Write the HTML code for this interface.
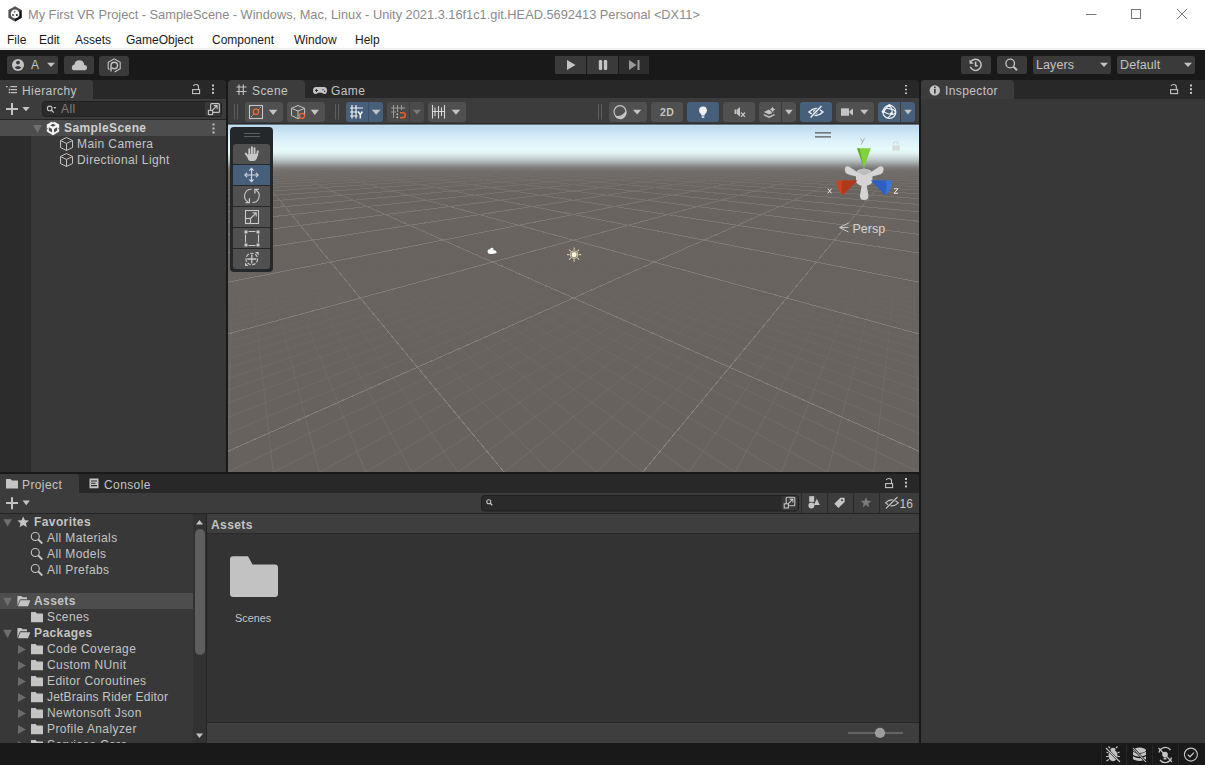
<!DOCTYPE html>
<html><head><meta charset="utf-8">
<style>
*{margin:0;padding:0;box-sizing:border-box}
html,body{width:1205px;height:765px;overflow:hidden;background:#191919;font-family:"Liberation Sans",sans-serif;position:relative}
.a{position:absolute}
.t{position:absolute;white-space:nowrap;color:#c4c4c4;font-size:12px;line-height:14px;letter-spacing:0.4px}
.m{letter-spacing:0}
.b{font-weight:bold}
.btn{position:absolute;background:#3a3a3a;border-radius:2px}
.tb{position:absolute;background:#505050;border-radius:3px;top:102px;height:20px}
.blue{background:#46607c}
svg{position:absolute;overflow:visible}
</style></head><body>
<!-- ============ title bar ============ -->
<div class="a" style="left:0;top:0;width:1205px;height:48px;background:#fff"></div>
<div class="a" style="left:0;top:48px;width:1205px;height:2px;background:#f0f0f0"></div>
<svg style="left:0;top:0" width="30" height="30">
<path d="M15 6.3L21.6 10.1V17.7L15 21.5L8.4 17.7V10.1Z" fill="#505050"/>
<path d="M21.6 10.1V17.7L15 21.5V19L19.5 16.4V11.3Z" fill="#111"/>
<circle cx="15" cy="13.9" r="4.3" fill="#f4f4f4"/>
<circle cx="14.7" cy="11.8" r="1" fill="#888"/>
<circle cx="13" cy="15" r="1" fill="#444"/>
<circle cx="16.8" cy="15" r="1" fill="#222"/>
</svg>
<div class="t m" style="left:28px;top:8px;color:#8a8a8a;font-size:12.8px">My First VR Project - SampleScene - Windows, Mac, Linux - Unity 2021.3.16f1c1.git.HEAD.5692413 Personal &lt;DX11&gt;</div>
<div class="t m" style="left:7px;top:33px;color:#1a1a1a">File</div>
<div class="t m" style="left:39px;top:33px;color:#1a1a1a">Edit</div>
<div class="t m" style="left:75px;top:33px;color:#1a1a1a">Assets</div>
<div class="t m" style="left:126px;top:33px;color:#1a1a1a">GameObject</div>
<div class="t m" style="left:212px;top:33px;color:#1a1a1a">Component</div>
<div class="t m" style="left:294px;top:33px;color:#1a1a1a">Window</div>
<div class="t m" style="left:355px;top:33px;color:#1a1a1a">Help</div>
<svg style="left:0;top:0" width="1205" height="30">
<path d="M1086 14.5H1096.5" stroke="#777" stroke-width="1"/>
<rect x="1131.5" y="9.5" width="9" height="9" stroke="#777" fill="none"/>
<path d="M1177 9L1187 19M1187 9L1177 19" stroke="#777" stroke-width="1"/>
</svg>

<!-- ============ main toolbar ============ -->
<div class="a" style="left:0;top:50px;width:1205px;height:30px;background:#191919"></div>
<div class="btn" style="left:7px;top:56px;width:51px;height:18px"></div>
<div class="btn" style="left:64px;top:56px;width:30px;height:18px"></div>
<div class="btn" style="left:99px;top:56px;width:30px;height:20px;border-radius:3px"></div>
<div class="btn" style="left:555px;top:56px;width:31px;height:18px;border-radius:0"></div>
<div class="btn" style="left:587px;top:56px;width:31px;height:18px;border-radius:0"></div>
<div class="btn" style="left:619px;top:56px;width:30px;height:18px;border-radius:0;background:#2d2d2d"></div>
<div class="btn" style="left:961px;top:56px;width:30px;height:18px"></div>
<div class="btn" style="left:997px;top:56px;width:30px;height:18px"></div>
<div class="btn" style="left:1033px;top:56px;width:78px;height:18px"></div>
<div class="btn" style="left:1117px;top:56px;width:78px;height:18px"></div>
<div class="t" style="left:31px;top:58px;color:#c4c4c4">A</div>
<div class="t" style="left:1036px;top:58px;color:#c4c4c4;font-size:12.5px;letter-spacing:0.1px">Layers</div>
<div class="t" style="left:1120px;top:58px;color:#c4c4c4;font-size:12.5px;letter-spacing:0.1px">Default</div>
<svg style="left:0;top:50px" width="1205" height="30">
<circle cx="18" cy="15" r="6" fill="#c4c4c4"/>
<circle cx="18" cy="12.6" r="1.9" fill="#3a3a3a"/>
<path d="M14.6 17.6Q18 14.6 21.4 17.6Q20 19.3 18 19.3Q16 19.3 14.6 17.6Z" fill="#3a3a3a"/>
<path d="M47 12.8H55L51 17Z" fill="#c4c4c4"/>
<path d="M73.5 20.2H85Q87 20.2 87 17.8Q87 15.2 84.3 15.1Q83.8 10.3 79.2 10.3Q75.3 10.3 74.4 14.5Q71.8 15 71.8 17.6Q71.8 20.2 73.5 20.2Z" fill="#c4c4c4"/>
<path d="M111 21.5V15.5Q111 12.3 114.3 12.3Q117.5 12.3 117.5 15.5Q117.5 18.7 114.3 18.7Q112.6 18.7 111.8 17.6" stroke="#c4c4c4" stroke-width="1.4" fill="none"/>
<path d="M109.5 19.5L108.2 18.7V12.2L114.2 8.8L120.2 12.2V18.7L114.6 21.9" stroke="#c4c4c4" stroke-width="1.1" fill="none"/>
<path d="M567 10V20L575.5 15Z" fill="#c4c4c4"/>
<rect x="598.8" y="10" width="3.4" height="10" rx="1.2" fill="#c4c4c4"/>
<rect x="603.8" y="10" width="3.4" height="10" rx="1.2" fill="#c4c4c4"/>
<path d="M629 10V20L636.5 15Z" fill="#9a9a9a"/>
<rect x="637.5" y="10" width="2" height="10" fill="#9a9a9a"/>
<path d="M971.2 11.3A5.6 5.6 0 1 1 970.3 16.8" stroke="#c4c4c4" stroke-width="1.5" fill="none"/>
<path d="M969.5 9.6V13.8H973.8Z" fill="#c4c4c4"/>
<path d="M975.6 11.5V15.7H977.8" stroke="#c4c4c4" stroke-width="1.6" fill="none"/>
<circle cx="1010.2" cy="13.5" r="4.3" stroke="#c4c4c4" stroke-width="1.3" fill="none"/>
<path d="M1013.3 16.6L1017 20.2" stroke="#c4c4c4" stroke-width="2" />
<path d="M1100 12.8H1108L1104 17Z" fill="#c4c4c4"/>
<path d="M1184 12.8H1192L1188 17Z" fill="#c4c4c4"/>
</svg>

<!-- ============ hierarchy ============ -->
<div class="a" style="left:0;top:80px;width:226px;height:392px;background:#383838;border-radius:0 4px 0 0"></div>
<div class="a" style="left:0;top:80px;width:226px;height:19px;background:#282828;border-radius:0 4px 0 0"></div>
<div class="a" style="left:0;top:80px;width:93px;height:19px;background:#3c3c3c;border-radius:0 3px 0 0"></div>
<div class="a" style="left:0;top:99px;width:226px;height:21px;background:#3c3c3c;border-bottom:1px solid #242424"></div>
<div class="a" style="left:42px;top:101px;width:180px;height:16px;background:#2a2a2a;border:1px solid #212121;border-radius:3px"></div>
<div class="a" style="left:205px;top:102px;width:16px;height:14px;background:#383838;border-radius:0 2px 2px 0"></div>
<div class="a" style="left:0;top:120px;width:226px;height:16px;background:#4d4d4d"></div>
<div class="a" style="left:0;top:136px;width:31px;height:336px;background:#2c2c2c"></div>
<div class="t" style="left:22px;top:84px">Hierarchy</div>
<div class="t" style="left:61px;top:102px;color:#7f7f7f">All</div>
<div class="t b" style="left:64px;top:121px;color:#d0d0d0">SampleScene</div>
<div class="t" style="left:77px;top:137px">Main Camera</div>
<div class="t" style="left:77px;top:153px">Directional Light</div>
<svg style="left:0;top:80px" width="226" height="80">
<g fill="#c4c4c4">
<rect x="10.5" y="6" width="6.5" height="1.2"/><rect x="10.5" y="9" width="6.5" height="1.2"/><rect x="10.5" y="12" width="6.5" height="1.2"/>
<rect x="6" y="6" width="1.6" height="1.2"/><rect x="8.7" y="9" width="1.2" height="1.2"/><rect x="8.7" y="12" width="1.2" height="1.2"/>
<rect x="9" y="7" width="0.6" height="6" opacity="0.6"/>
</g>
<path d="M193.2 6Q194 4.5 196 4.5Q198.5 4.5 198.5 6.8V9.5" stroke="#c4c4c4" stroke-width="1.1" fill="none"/>
<rect x="192.6" y="9.6" width="7" height="4" stroke="#c4c4c4" stroke-width="1.1" fill="none"/>
<rect x="212" y="4.5" width="2" height="2" fill="#c4c4c4"/><rect x="212" y="8.2" width="2" height="2" fill="#c4c4c4"/><rect x="212" y="11.9" width="2" height="2" fill="#c4c4c4"/>
<rect x="6" y="28" width="12" height="2" fill="#c4c4c4"/><rect x="11" y="23" width="2" height="12" fill="#c4c4c4"/>
<path d="M22.3 27H29.7L26 31.2Z" fill="#c4c4c4"/>
<circle cx="49.7" cy="28.4" r="2.3" stroke="#c4c4c4" stroke-width="1.1" fill="none"/>
<path d="M51.3 30L53.8 32.6" stroke="#c4c4c4" stroke-width="1.3"/>
<path d="M53.3 27H56.4L54.85 29Z" fill="#c4c4c4"/>
<rect x="210.6" y="23.6" width="8.8" height="8.8" rx="1" stroke="#c4c4c4" stroke-width="1.1" fill="none"/>
<rect x="208.4" y="30.4" width="4.2" height="4.2" stroke="#c4c4c4" stroke-width="1.1" fill="#383838"/>
<path d="M212.5 30.2L216.8 25.9M213.8 25.6H217.1V28.9" stroke="#c4c4c4" stroke-width="1.1" fill="none"/>
<path d="M33 45H42L37.5 53Z" fill="#6e6e6e"/>
<rect x="212.5" y="43.5" width="2" height="2" fill="#c4c4c4"/><rect x="212.5" y="47.5" width="2" height="2" fill="#c4c4c4"/><rect x="212.5" y="51.5" width="2" height="2" fill="#c4c4c4"/>
<path d="M53 41L59.2 44.6V51.6L53 55.2L46.8 51.6V44.6Z" fill="#f4f4f4"/>
<g fill="#4d4d4d">
<path d="M50.3 45.3L53 43.8L55.7 45.3L53 46.8Z"/>
<path d="M48.8 47.2L52 49V52.4L48.8 50.6Z"/>
<path d="M57.2 47.2L54 49V52.4L57.2 50.6Z"/>
<path d="M51.8 41H54.2L53 43Z"/>
<path d="M46.6 47.5L47.9 48.5L46.6 49.5Z"/>
<path d="M59.4 47.5L58.1 48.5L59.4 49.5Z"/>
</g>
<g stroke="#c4c4c4" stroke-width="1" fill="none" stroke-linejoin="round">
<path d="M66.5 57.5L72.5 60.5V67.5L66.5 70.5L60.5 67.5V60.5Z"/><path d="M60.5 60.5L66.5 63.5L72.5 60.5M66.5 63.5V70.5"/>
<path d="M66.5 73.5L72.5 76.5V83.5L66.5 86.5L60.5 83.5V76.5Z"/><path d="M60.5 76.5L66.5 79.5L72.5 76.5M66.5 79.5V86.5"/>
</g>
</svg>

<!-- ============ scene ============ -->
<div class="a" style="left:228px;top:80px;width:691px;height:392px;background:#282828;border-radius:4px 4px 0 0"></div>
<div class="a" style="left:228px;top:80px;width:77px;height:19px;background:#3c3c3c;border-radius:4px 4px 0 0"></div>
<div class="a" style="left:228px;top:98px;width:691px;height:26px;background:#3c3c3c"></div>
<div class="t" style="left:252px;top:84px">Scene</div>
<div class="t" style="left:331px;top:84px">Game</div>
<div class="tb" style="left:245px;width:38px"></div>
<div class="tb" style="left:287px;width:38px"></div>
<div class="tb blue" style="left:346px;width:37px"></div>
<div class="a" style="left:368px;top:102px;width:1px;height:20px;background:#3a4e66"></div>
<div class="tb" style="left:387px;width:37px;background:#4a4a4a"></div>
<div class="a" style="left:409px;top:102px;width:1px;height:20px;background:#3c3c3c"></div>
<div class="tb" style="left:428px;width:38px"></div>
<div class="tb" style="left:609px;width:38px"></div>
<div class="tb" style="left:651px;width:32px"></div>
<div class="tb blue" style="left:687px;width:32px"></div>
<div class="tb" style="left:723px;width:32px"></div>
<div class="tb" style="left:759px;width:37px"></div>
<div class="a" style="left:781px;top:102px;width:1px;height:20px;background:#3c3c3c"></div>
<div class="tb blue" style="left:800px;width:32px"></div>
<div class="tb" style="left:836px;width:38px"></div>
<div class="tb blue" style="left:878px;width:37px"></div>
<div class="a" style="left:900px;top:102px;width:1px;height:20px;background:#3c3c3c"></div>
<div class="t b" style="left:660px;top:105px;font-size:10.5px;color:#c4c4c4">2D</div>
<div class="a" style="left:228px;top:124px;width:691px;height:348px;overflow:hidden"><svg style="left:0;top:0;overflow:hidden" width="691" height="348" viewBox="228 124 691 348">
<defs>
<linearGradient id="sky" x1="0" y1="124" x2="0" y2="472" gradientUnits="userSpaceOnUse">
<stop offset="0.0000" stop-color="#c4e0f4"/>
<stop offset="0.0086" stop-color="#bedaee"/>
<stop offset="0.0259" stop-color="#cce6f4"/>
<stop offset="0.0489" stop-color="#ddf2fa"/>
<stop offset="0.0718" stop-color="#e6fafc"/>
<stop offset="0.0833" stop-color="#e2f2f2"/>
<stop offset="0.0920" stop-color="#d4e0e0"/>
<stop offset="0.1006" stop-color="#c2cece"/>
<stop offset="0.1092" stop-color="#aab3b3"/>
<stop offset="0.1178" stop-color="#929595"/>
<stop offset="0.1264" stop-color="#7c7b79"/>
<stop offset="0.1351" stop-color="#716d6a"/>
<stop offset="0.1466" stop-color="#6d6966"/>
<stop offset="0.1897" stop-color="#69645f"/>
<stop offset="1.0000" stop-color="#68625e"/>
</linearGradient>
<linearGradient id="gmaj" x1="0" y1="168" x2="0" y2="472" gradientUnits="userSpaceOnUse">
<stop offset="0.0000" stop-color="#fff" stop-opacity="0.000"/>
<stop offset="0.0329" stop-color="#fff" stop-opacity="0.030"/>
<stop offset="0.0724" stop-color="#fff" stop-opacity="0.080"/>
<stop offset="0.1382" stop-color="#fff" stop-opacity="0.120"/>
<stop offset="0.2697" stop-color="#fff" stop-opacity="0.150"/>
<stop offset="1.0000" stop-color="#fff" stop-opacity="0.190"/>
</linearGradient>
<linearGradient id="gmin" x1="0" y1="260" x2="0" y2="472" gradientUnits="userSpaceOnUse">
<stop offset="0" stop-color="#fff" stop-opacity="0"/>
<stop offset="0.4" stop-color="#fff" stop-opacity="0.03"/>
<stop offset="1" stop-color="#fff" stop-opacity="0.07"/>
</linearGradient>
</defs>
<rect x="228" y="124" width="691" height="348" fill="url(#sky)"/>
<path d="M573.5 206.5L1106.3 298.0M573.5 206.5L40.7 298.0M569.3 207.3L1112.7 302.9M577.7 207.3L34.3 302.9M565.0 208.0L1119.6 308.1M582.0 208.0L27.4 308.1M560.7 208.7L1126.9 313.7M586.3 208.7L20.1 313.7M556.2 209.5L1134.8 319.7M590.8 209.5L12.2 319.7M546.8 211.1L1152.4 333.0M600.2 211.1L-5.4 333.0M541.9 212.0L1162.3 340.5M605.1 212.0L-15.3 340.5M536.9 212.8L1173.0 348.7M610.1 212.8L-26.0 348.7M531.8 213.7L1184.7 357.5M615.2 213.7L-37.7 357.5M526.5 214.6L1197.5 367.2M620.5 214.6L-50.5 367.2M521.1 215.5L1211.4 377.8M625.9 215.5L-64.4 377.8M515.5 216.5L1226.9 389.5M631.5 216.5L-79.9 389.5M509.7 217.5L1243.9 402.5M637.3 217.5L-96.9 402.5M503.8 218.5L1263.0 416.9M643.2 218.5L-116.0 416.9M491.4 220.6L1308.4 451.4M655.6 220.6L-161.4 451.4M484.9 221.7L1335.7 472.2M662.1 221.7L-188.7 472.2M478.3 222.9L1367.2 496.0M668.7 222.9L-220.2 496.0M471.4 224.1L1403.6 523.7M675.6 224.1L-256.6 523.7M464.2 225.3L1446.3 556.1M682.8 225.3L-299.3 556.1M456.9 226.6L1497.1 594.7M690.1 226.6L-350.1 594.7M449.3 227.9L1558.5 641.3M697.7 227.9L-411.5 641.3M441.4 229.2L1634.3 698.9M705.6 229.2L-487.3 698.9M433.3 230.6L1730.2 771.6M713.7 230.6L-583.2 771.6M416.1 233.6L2025.3 995.7M730.9 233.6L-878.3 995.7M407.1 235.1L2270.0 1181.4M739.9 235.1L-1123.0 1181.4M397.7 236.7L2652.1 1471.5M749.3 236.7L-1505.1 1471.5M387.9 238.4L3332.8 1988.3M759.1 238.4L-2185.8 1988.3M377.8 240.1L4886.5 3167.9M769.2 240.1L-3739.5 3167.9M367.3 241.9L8574.3 6116.2M779.7 241.9L-7427.3 6116.2M356.4 243.8L7721.8 6116.2M790.6 243.8L-6574.8 6116.2M345.0 245.8L6869.3 6116.2M802.0 245.8L-5722.3 6116.2M333.1 247.8L6016.8 6116.2M813.9 247.8L-4869.8 6116.2M307.8 252.2L4311.9 6116.2M839.2 252.2L-3164.9 6116.2M294.3 254.5L3459.4 6116.2M852.7 254.5L-2312.4 6116.2M280.1 256.9L2606.9 6116.2M866.9 256.9L-1459.9 6116.2M265.3 259.4L1754.4 6116.2M881.7 259.4L-607.4 6116.2M249.8 262.1L901.9 6116.2M897.2 262.1L245.1 6116.2M233.5 264.9L49.4 6116.2M913.5 264.9L1097.6 6116.2" stroke="url(#gmin)" stroke-width="1" fill="none"/>
<path d="M573.5 154.5L9098.4 298.0M573.5 154.5L-7951.4 298.0M569.4 154.5L12896.5 367.2M577.6 154.5L-11749.5 367.2M565.2 154.6L23266.1 556.1M581.8 154.6L-22119.1 556.1M560.9 154.7L166624.8 3167.9M586.1 154.7L-165477.8 3167.9M556.5 154.8L320584.9 6116.2M590.5 154.8L-319437.9 6116.2M552.0 154.8L312060.0 6116.2M595.0 154.8L-310913.0 6116.2M547.3 154.9L303535.1 6116.2M599.7 154.9L-302388.1 6116.2M542.6 155.0L295010.3 6116.2M604.4 155.0L-293863.3 6116.2M537.7 155.1L286485.4 6116.2M609.3 155.1L-285338.4 6116.2M532.7 155.2L277960.5 6116.2M614.3 155.2L-276813.5 6116.2M527.5 155.3L269435.6 6116.2M619.5 155.3L-268288.6 6116.2M522.2 155.3L260910.7 6116.2M624.8 155.3L-259763.7 6116.2M516.8 155.4L252385.9 6116.2M630.2 155.4L-251238.9 6116.2M511.2 155.5L243861.0 6116.2M635.8 155.5L-242714.0 6116.2M505.4 155.6L235336.1 6116.2M641.6 155.6L-234189.1 6116.2M499.5 155.7L226811.2 6116.2M647.5 155.7L-225664.2 6116.2M493.4 155.8L218286.3 6116.2M653.6 155.8L-217139.3 6116.2M487.1 155.9L209761.5 6116.2M659.9 155.9L-208614.5 6116.2M480.6 156.0L201236.6 6116.2M666.4 156.0L-200089.6 6116.2M473.9 156.2L192711.7 6116.2M673.1 156.2L-191564.7 6116.2M467.0 156.3L184186.8 6116.2M680.0 156.3L-183039.8 6116.2M459.9 156.4L175661.9 6116.2M687.1 156.4L-174514.9 6116.2M452.5 156.5L167137.1 6116.2M694.5 156.5L-165990.1 6116.2M444.9 156.6L158612.2 6116.2M702.1 156.6L-157465.2 6116.2M437.1 156.8L150087.3 6116.2M709.9 156.8L-148940.3 6116.2M428.9 156.9L141562.4 6116.2M718.1 156.9L-140415.4 6116.2M420.5 157.1L133037.5 6116.2M726.5 157.1L-131890.5 6116.2M411.8 157.2L124512.7 6116.2M735.2 157.2L-123365.7 6116.2M402.8 157.4L115987.8 6116.2M744.2 157.4L-114840.8 6116.2M393.4 157.5L107462.9 6116.2M753.6 157.5L-106315.9 6116.2M383.7 157.7L98938.0 6116.2M763.3 157.7L-97791.0 6116.2M373.6 157.8L90413.1 6116.2M773.4 157.8L-89266.1 6116.2M363.1 158.0L81888.3 6116.2M783.9 158.0L-80741.3 6116.2M352.2 158.2L73363.4 6116.2M794.8 158.2L-72216.4 6116.2M340.9 158.4L64838.5 6116.2M806.1 158.4L-63691.5 6116.2M329.1 158.6L56313.6 6116.2M817.9 158.6L-55166.6 6116.2M316.8 158.8L47788.7 6116.2M830.2 158.8L-46641.7 6116.2M303.9 159.0L39263.9 6116.2M843.1 159.0L-38116.9 6116.2M290.5 159.2L30739.0 6116.2M856.5 159.2L-29592.0 6116.2M276.5 159.5L22214.1 6116.2M870.5 159.5L-21067.1 6116.2M261.8 159.7L13689.2 6116.2M885.2 159.7L-12542.2 6116.2M246.4 160.0L5164.4 6116.2M900.6 160.0L-4017.4 6116.2M230.3 160.3L-3360.5 6116.2M916.7 160.3L4507.5 6116.2" stroke="url(#gmaj)" stroke-width="1" fill="none" shape-rendering="crispEdges"/>
</svg></div>
<div class="a" style="left:228px;top:123px;width:691px;height:1px;background:#2c2c2c"></div>
<div class="a" style="left:228px;top:124px;width:691px;height:1px;background:#2a2e32;opacity:0.6"></div>
<svg style="left:0;top:0" width="1205" height="130">
<g stroke="#c4c4c4" stroke-width="1.1" fill="none">
<path d="M239 84.5V95M243.3 84.5V95M236.5 87H246.5M236.5 91.5H246.5"/>
</g>
<path d="M316 87H324Q327 87 327 90.5Q327 94 324.5 94Q323 94 322 92.8H318Q317 94 315.5 94Q313 94 313 90.5Q313 87 316 87Z" fill="#c4c4c4"/>
<path d="M315 90.5H318M316.5 89V92" stroke="#282828" stroke-width="0.9"/>
<circle cx="323" cy="89.6" r="0.7" fill="#282828"/><circle cx="324.6" cy="91.2" r="0.7" fill="#282828"/>
<path d="M906 85v1.5M906 88.7v1.5M906 92.4v1.5" stroke="#c4c4c4" stroke-width="2"/>
<g stroke="#5e5e5e" stroke-width="1"><path d="M234.5 104V119.5M237.5 104V119.5M335.5 104V119.5M338.5 104V119.5M598.5 104V119.5M601.5 104V119.5"/></g>
<rect x="249.5" y="105.5" width="13" height="13" stroke="#c4c4c4" stroke-width="1.1" fill="none"/>
<path d="M251 117L261 107" stroke="#c4c4c4" stroke-width="0.9" stroke-dasharray="1.5 1"/>
<circle cx="256" cy="111.8" r="2.6" stroke="#f26b2f" stroke-width="1.2" fill="#505050"/>
<g fill="#c4c4c4"><path d="M268.9 109.7H277.3L273.1 114.9Z"/><path d="M310.7 109.7H319L314.85 114.9Z"/>
<path d="M371.8 109.7H380.5L376.15 114.7Z"/><path d="M451.6 109.7H460.3L455.95 114.7Z"/>
<path d="M633 109.7H641.3L637.15 114.5Z"/><path d="M785.1 109.7H792.7L788.9 114.5Z"/><path d="M860.2 109.7H868.4L864.3 114.5Z"/><path d="M904.3 109.7H911.8L908 114.5Z"/></g>
<path d="M413 109.7H421L417 114.5Z" fill="#7a7a7a"/>
<g stroke="#c4c4c4" stroke-width="1" fill="none" stroke-linejoin="round">
<path d="M298 105.5L304.6 108.3V115.6L298 118.6L291.5 115.6V108.3Z"/><path d="M291.5 108.3L298 111L304.6 108.3M298 111V118.6"/>
</g>
<circle cx="302" cy="115.8" r="2.5" stroke="#f26b2f" stroke-width="1.2" fill="#505050"/>
<g stroke="#f0f0f0" stroke-width="1.2" fill="none">
<path d="M352 105V118.5M356 105V118.5M350 108H363M350 112H357.5M350 116H357.5"/>
<path d="M358.2 111.5L360.3 114.6L362.4 111.5M360.3 114.6V118.5" stroke-width="1.5"/>
</g>
<g stroke="#9a9a9a" stroke-width="1" fill="none">
<path d="M393.5 105V118M397.5 105V112M401.5 105V110M391.2 108H405.3M391.2 112H396"/>
</g>
<rect x="396.5" y="113.5" width="1.6" height="1.6" fill="#c4c4c4"/><rect x="396.5" y="116.5" width="1.6" height="1.6" fill="#c4c4c4"/>
<path d="M400 112.8H403Q405.2 112.8 405.2 115.2Q405.2 117.6 403 117.6H400" stroke="#e2602c" stroke-width="1.6" fill="none"/>
<g stroke="#d8d8d8" stroke-width="1.1" fill="none">
<path d="M432.5 105V118.5M444.5 105V118.5M435 107.5V116M438.5 106V118.5M441.5 107.5V116M432 111.5H445"/>
</g>
<circle cx="620" cy="111.7" r="6" stroke="#c4c4c4" stroke-width="1.2" fill="none"/>
<path d="M626 110.5A6 6 0 0 1 614.6 115.5Q620 117.2 623.6 113.5Q625.6 111.6 626 110.5Z" fill="#c4c4c4"/>
<circle cx="703" cy="110.3" r="3.9" fill="#f0f0f0"/>
<path d="M700.7 112.5H705.3L704.6 115.5H701.4Z" fill="#f0f0f0"/>
<rect x="701.6" y="116.2" width="2.8" height="1.6" rx="0.6" fill="#f0f0f0"/>
<path d="M734.5 109.5H736.5V114H734.5Z" fill="#c4c4c4"/>
<path d="M737 109.5L740 107V116.8L737 114Z" fill="#c4c4c4"/>
<path d="M741 112.5L745 116.8M745 112.5L741 116.8" stroke="#c4c4c4" stroke-width="1.2"/>
<path d="M763.8 112L769 109.6L774.5 112L769 114.6Z" fill="#c4c4c4"/>
<path d="M763.8 114.6L769 117.2L774.5 114.6" stroke="#c4c4c4" stroke-width="1.4" fill="none"/>
<path d="M772.6 105.8Q773.2 108.8 776.2 109.4Q773.2 110 772.6 113Q772 110 769 109.4Q772 108.8 772.6 105.8Z" fill="#c4c4c4" stroke="#505050" stroke-width="0.9"/>
<path d="M809 112Q816 105.2 823 112Q816 118.8 809 112Z" stroke="#f0f0f0" stroke-width="1.4" fill="none"/>
<circle cx="815.3" cy="112" r="2.3" fill="#f0f0f0"/>
<path d="M810.3 117.8L821.8 105.8" stroke="#46607c" stroke-width="2.8"/>
<path d="M810.6 117.5L821.5 106.1" stroke="#f0f0f0" stroke-width="1.4"/>
<rect x="841" y="108.3" width="8" height="7.5" fill="#c4c4c4"/>
<path d="M849.5 111L853 108.5V115.6L849.5 113Z" fill="#c4c4c4"/>
<g stroke="#f0f0f0" stroke-width="1.1" fill="none">
<circle cx="889.4" cy="111.9" r="6.5"/>
<ellipse cx="889.6" cy="111.4" rx="5.8" ry="2.6" transform="rotate(12 889.6 111.4)"/>
<path d="M889.4 105.5Q893.5 109 891.6 113.5Q890 116.5 887.5 118"/>
<path d="M884 111.8Q886 107 889.4 105.5"/>
</g>
<g fill="#f0f0f0"><circle cx="889.4" cy="105.6" r="1.6"/><circle cx="883.2" cy="111.6" r="1.6"/><circle cx="891.6" cy="113.5" r="1.5"/></g>
</svg>

<svg style="left:0;top:0" width="1205" height="480">
<path d="M487.5 251.5Q487.5 249 490 249.2Q490.8 247.6 492.3 247.8Q493.8 248 493.6 250Q496.5 250.3 496.8 252.8Q494 254.3 490 254Q487.5 253.6 487.5 251.5Z" fill="#fafafa"/>
<g stroke="#d8cca8" stroke-width="1.1">
<path d="M574.1 247.5V250M574.1 259.2V261.7M567 254.6H569.5M578.7 254.6H581.2M569.1 249.6L570.8 251.3M577.4 257.9L579.1 259.6M579.1 249.6L577.4 251.3M570.8 257.9L569.1 259.6"/>
</g>
<circle cx="574.1" cy="254.6" r="3.8" stroke="#d8cca8" stroke-width="1" fill="none"/>
<circle cx="574.1" cy="254.6" r="2.6" fill="#fff4d6"/>
<rect x="230" y="127" width="43" height="145" rx="4" fill="#25282a"/>
<path d="M244 133.5H260M244 136.5H260" stroke="#5c5f62" stroke-width="1"/>
<path d="M233 147Q233 144 236 144H267Q270 144 270 147V164H233Z" fill="#505050"/>
<rect x="233" y="165" width="37" height="20" fill="#46607c"/>
<rect x="233" y="186" width="37" height="20" fill="#505050"/>
<rect x="233" y="207" width="37" height="20" fill="#505050"/>
<rect x="233" y="228" width="37" height="20" fill="#505050"/>
<path d="M233 249H270V266Q270 269 267 269H236Q233 269 233 266Z" fill="#505050"/>
<g stroke="#c8c8c8" stroke-width="1.9" stroke-linecap="round" fill="none">
<path d="M249.3 155V149.2M251.9 155V147.3M254.5 155V148.2M256.9 155.5L257.8 151.2M248.6 157.5L245.8 153.6"/>
</g>
<path d="M248.3 154H258.2L256.8 158.5Q255.6 161 253.5 161H250.5Q248.6 161 247.8 158.8Z" fill="#c8c8c8"/>
<g stroke="#d0d8e0" stroke-width="1.2" fill="none">
<path d="M251.5 168.5V181.5M245 175H258"/>
<path d="M249.3 170.6L251.5 168.4L253.7 170.6M249.3 179.4L251.5 181.6L253.7 179.4M247.1 172.8L244.9 175L247.1 177.2M255.9 172.8L258.1 175L255.9 177.2"/>
</g>
<g stroke="#c8c8c8" stroke-width="1.1" fill="none">
<path d="M251.6 189.3A6.7 6.7 0 0 0 248 201.8M252.4 202.5A6.7 6.7 0 0 0 255.8 190"/>
<path d="M249.4 198.2V202.6H245.5M258.8 189.3H254.9V193.5" stroke-width="1.3"/>
<rect x="245.5" y="210.5" width="13" height="13"/>
<rect x="245.5" y="218.5" width="5" height="5"/>
<path d="M250.5 218.5L256 213M252.5 212.8H256.2V216.5"/>
<path d="M248.5 231.5H255.5M248.5 245.5H255.5M245.5 234.5V242.5M258.5 234.5V242.5"/>
<circle cx="251.8" cy="259" r="5.8" stroke-dasharray="3.5 1.5"/>
<path d="M251.8 254.5V263.5M247.3 259H256.3" stroke-width="1.3"/>
</g>
<g fill="#c8c8c8"><rect x="244.5" y="230.5" width="3" height="3"/><rect x="256.5" y="230.5" width="3" height="3"/><rect x="244.5" y="243.5" width="3" height="3"/><rect x="256.5" y="243.5" width="3" height="3"/>
<path d="M245 266H248.5L245 262.5Z"/><path d="M258.6 252H255.1L258.6 255.5Z"/></g>
<path d="M815 132.8H831M815 136.8H831" stroke="#5a5a5a" stroke-width="1.2"/>
<path d="M893.3 144.5Q893.3 141.8 895.8 141.8Q898.3 141.8 898.3 144.5" stroke="#d6dcdc" stroke-width="1.2" fill="none"/>
<rect x="892.3" y="145.5" width="7.5" height="5" fill="#d6dcdc"/>
<path d="M860.6 138.3L862.6 142M864.6 138.3L861.2 144.5" stroke="#b4bcbc" stroke-width="1.1"/>
<path d="M857.1 148.2H870.8L863.9 168Z" fill="#80d040"/>
<path d="M857.1 148.2H859.5L863.9 168Z" fill="#5fae2a"/>
<g fill="#d4d4d4">
<path d="M856 174Q856 171 859 169.8L864 168.5L869 169.8Q872.4 171 872.4 174V181Q872.4 183.5 869 185L864 186.5L859 185Q856 183.5 856 181Z"/>
<path d="M858 172.5L849 166.5Q845 165.5 844.8 169.5Q845 173.5 848.5 174.5L858 177Z"/>
<path d="M870.4 172.5L879.4 166.5Q883.4 165.5 883.6 169.5Q883.4 173.5 879.9 174.5L870.4 177Z"/>
<path d="M862 184L860 195Q859.5 200 864.2 200Q868.9 200 868.4 195L866.4 184Z"/>
</g>
<path d="M856.5 172L864 168.6L871.9 172L864 175.5Z" fill="#bdbdbd"/>
<path d="M836.3 180.4H857.1L843 195Q837.5 192 836.3 180.4Z" fill="#c8431f"/>
<path d="M843 195Q840.5 188 842.5 180.4H857.1Z" fill="#b0391a"/>
<path d="M892 180.4H871L885 195Q890.5 192 892 180.4Z" fill="#3a72dc"/>
<path d="M885 195Q887.5 188 885.5 180.4H871Z" fill="#2f5fc0"/>
<path d="M827.8 188.7L831.5 193.3M831.5 188.7L827.8 193.3" stroke="#e8e8e8" stroke-width="1"/>
<path d="M894 188.8H898L894 193.3H898" stroke="#e8e8e8" stroke-width="1" fill="none"/>
<path d="M848.5 223L839.5 227.5L848.5 232M840 227.5H848.5" stroke="#d0d0d0" stroke-width="0.9" fill="none"/>
</svg>
<div class="t" style="left:852.5px;top:221.5px;color:#d2d2d2;font-size:12.5px;letter-spacing:0">Persp</div>

<!-- ============ inspector ============ -->
<div class="a" style="left:921px;top:80px;width:284px;height:663px;background:#383838;border-radius:4px 0 0 0"></div>
<div class="a" style="left:921px;top:80px;width:284px;height:19px;background:#282828;border-radius:4px 0 0 0"></div>
<div class="a" style="left:921px;top:80px;width:93px;height:19px;background:#3c3c3c;border-radius:4px 4px 0 0"></div>
<div class="t" style="left:945px;top:84px">Inspector</div>
<svg style="left:0;top:80px" width="1205" height="20">
<circle cx="934.8" cy="10.4" r="5.2" fill="#c4c4c4"/>
<rect x="934" y="9" width="1.7" height="4.5" fill="#3c3c3c"/><rect x="934" y="6.6" width="1.7" height="1.6" fill="#3c3c3c"/>
<path d="M1171 6Q1171.8 4.5 1173.8 4.5Q1176.3 4.5 1176.3 6.8V9.5" stroke="#c4c4c4" stroke-width="1.1" fill="none"/>
<rect x="1170.6" y="9.6" width="7" height="4" stroke="#c4c4c4" stroke-width="1.1" fill="none"/>
<rect x="1190" y="4.5" width="2" height="2" fill="#c4c4c4"/><rect x="1190" y="8.2" width="2" height="2" fill="#c4c4c4"/><rect x="1190" y="11.9" width="2" height="2" fill="#c4c4c4"/>
</svg>

<!-- ============ project ============ -->
<div class="a" style="left:0;top:474px;width:919px;height:269px;background:#383838;border-radius:0 4px 0 0"></div>
<div class="a" style="left:0;top:474px;width:919px;height:19px;background:#282828;border-radius:0 4px 0 0"></div>
<div class="a" style="left:0;top:474px;width:79px;height:19px;background:#3c3c3c;border-radius:0 3px 0 0"></div>
<div class="a" style="left:0;top:493px;width:919px;height:21px;background:#3c3c3c;border-bottom:1px solid #242424"></div>
<div class="a" style="left:193px;top:514px;width:13px;height:229px;background:#323232"></div>
<div class="a" style="left:206px;top:514px;width:1px;height:229px;background:#242424"></div>
<div class="a" style="left:207px;top:514px;width:712px;height:229px;background:#333333"></div>
<div class="a" style="left:207px;top:514px;width:712px;height:20px;background:#3e3e3e;border-bottom:1px solid #2a2a2a"></div>
<div class="a" style="left:0;top:593px;width:193px;height:16px;background:#4d4d4d"></div>
<div class="a" style="left:195px;top:529px;width:10px;height:126px;background:#5e5e5e;border-radius:5px"></div>
<div class="a" style="left:207px;top:722px;width:712px;height:21px;background:#3e3e3e;border-top:1px solid #2a2a2a"></div>
<div class="t" style="left:22px;top:478px">Project</div>
<div class="t" style="left:104px;top:478px">Console</div>
<div class="t b" style="left:34px;top:515px">Favorites</div>
<div class="t" style="left:47px;top:531px">All Materials</div>
<div class="t" style="left:47px;top:547px">All Models</div>
<div class="t" style="left:47px;top:563px">All Prefabs</div>
<div class="t b" style="left:34px;top:594px">Assets</div>
<div class="t" style="left:47px;top:610px">Scenes</div>
<div class="t b" style="left:34px;top:626px">Packages</div>
<div class="t" style="left:47px;top:642px">Code Coverage</div>
<div class="t" style="left:47px;top:658px">Custom NUnit</div>
<div class="t" style="left:47px;top:674px">Editor Coroutines</div>
<div class="t" style="left:47px;top:690px;letter-spacing:0.2px">JetBrains Rider Editor</div>
<div class="t" style="left:47px;top:706px">Newtonsoft Json</div>
<div class="t" style="left:47px;top:722px">Profile Analyzer</div>
<div class="t" style="left:47px;top:738px">Services Core</div>
<div class="t b" style="left:211px;top:518px">Assets</div>
<div class="t" style="left:235px;top:610.5px;font-size:10.8px;letter-spacing:0.05px">Scenes</div>
<div class="t" style="left:899.5px;top:497px;font-size:12px;letter-spacing:0.2px">16</div>
<svg style="left:0;top:470px" width="1205" height="295">
<path d="M6 9.5Q6 9 6.5 9H10.5L12 10.5H17.5Q18 10.5 18 11V18.6H6Z" fill="#c4c4c4"/>
<path d="M89.5 8.5H98.5V18.3H89.5Z" fill="#c4c4c4"/>
<path d="M91 11H97M91 13.3H95.5M91 15.6H97" stroke="#282828" stroke-width="1.1"/>
<rect x="6" y="32" width="12" height="2" fill="#c4c4c4"/><rect x="11" y="27.2" width="2" height="12" fill="#c4c4c4"/>
<path d="M22.6 30.6H29.9L26.25 35.2Z" fill="#c4c4c4"/>
<rect x="481.5" y="25.5" width="317" height="15.5" rx="3" fill="#2a2a2a" stroke="#1f1f1f"/>
<rect x="781.5" y="26.2" width="16" height="14" fill="#383838"/>
<circle cx="488.8" cy="31.8" r="2" stroke="#c4c4c4" stroke-width="1.1" fill="none"/>
<path d="M490.2 33.2L492.2 35.2" stroke="#c4c4c4" stroke-width="1.3"/>
<rect x="786.2" y="27.2" width="8.6" height="8.6" rx="1" stroke="#c4c4c4" stroke-width="1.1" fill="none"/>
<rect x="784.2" y="33.8" width="4.2" height="4.2" stroke="#c4c4c4" stroke-width="1.1" fill="#383838"/>
<path d="M788.3 33.7L792.6 29.4M789.6 29.1H792.9V32.4" stroke="#c4c4c4" stroke-width="1.1" fill="none"/>
<g fill="#2a2a2a"><rect x="801" y="22" width="1" height="21"/><rect x="827" y="22" width="1" height="21"/><rect x="853" y="22" width="1" height="21"/><rect x="879" y="22" width="1" height="21"/></g>
<rect x="809.2" y="26.2" width="5" height="5.6" fill="#c4c4c4"/>
<circle cx="811.4" cy="35.6" r="3" fill="#c4c4c4"/>
<path d="M816.8 28.8L819.8 35H813.8Z" fill="#c4c4c4"/>
<path d="M834.3 33.8L840.4 27.8H844.6V32L838.5 38.1Z" fill="#c4c4c4"/>
<circle cx="842" cy="30.3" r="1" fill="#3c3c3c"/>
<path d="M866 27.2L867.5 30.8L871.2 31L868.3 33.4L869.3 37.2L866 35.1L862.7 37.2L863.7 33.4L860.8 31L864.5 30.8Z" fill="#7a7a7a"/>
<path d="M885.5 32.8Q891.5 26.8 898.5 32.8Q891.5 38.8 885.5 32.8Z" stroke="#c4c4c4" stroke-width="1.1" fill="none"/>
<path d="M886 38.5L897.5 27" stroke="#3c3c3c" stroke-width="2.4"/>
<path d="M886 38.5L897.5 27" stroke="#c4c4c4" stroke-width="1.1"/>
<g fill="#6e6e6e">
<path d="M3.3 49.2H12L7.65 56.5Z"/>
<path d="M3.2 127.8H11.9L7.55 136Z"/>
<path d="M3.2 159.8H11.9L7.55 168Z"/>
</g>
<g fill="#6a6a6a">
<path d="M18 174.9L26 179.45L18 184Z"/><path d="M18 190.9L26 195.45L18 200Z"/><path d="M18 206.9L26 211.45L18 216Z"/><path d="M18 222.9L26 227.45L18 232Z"/><path d="M18 238.9L26 243.45L18 248Z"/><path d="M18 254.9L26 259.45L18 264Z"/><path d="M18 270.9L26 275.45L18 280Z"/>
</g>
<path d="M23.2 46.5L24.9 50.3L29 50.6L25.9 53.3L26.8 57.2L23.2 55L19.6 57.2L20.5 53.3L17.4 50.6L21.5 50.3Z" fill="#c4c4c4"/>
<g stroke="#c4c4c4" stroke-width="1.1" fill="none">
<circle cx="35.3" cy="66.5" r="4"/><circle cx="35.3" cy="82.5" r="4"/><circle cx="35.3" cy="98.5" r="4"/>
</g>
<g stroke="#c4c4c4" stroke-width="1.8">
<path d="M38.3 69.5L42.3 73.5M38.3 85.5L42.3 89.5M38.3 101.5L42.3 105.5"/>
</g>
<g fill="#c4c4c4">
<path d="M17.4 136V126.6Q17.4 126 18 126H21.3L22.6 127.3H26.5Q27 127.3 27 127.8V129.2H20.6Q20 129.2 19.8 129.8Z" />
<path d="M18 136.3L20.4 130.2H30.3L28 136.3Z"/>
<path d="M17.4 168V158.6Q17.4 158 18 158H21.3L22.6 159.3H26.5Q27 159.3 27 159.8V161.2H20.6Q20 161.2 19.8 161.8Z" />
<path d="M18 168.3L20.4 162.2H30.3L28 168.3Z"/>
<path d="M31 142.6Q31 142 31.6 142H35.5L37 143.5H42.5Q43 143.5 43 144V152.3H31Z"/>
<path d="M31 174.6Q31 174 31.6 174H35.5L37 175.5H42.5Q43 175.5 43 176V184.3H31Z"/>
<path d="M31 190.6Q31 190 31.6 190H35.5L37 191.5H42.5Q43 191.5 43 192V200.3H31Z"/>
<path d="M31 206.6Q31 206 31.6 206H35.5L37 207.5H42.5Q43 207.5 43 208V216.3H31Z"/>
<path d="M31 222.6Q31 222 31.6 222H35.5L37 223.5H42.5Q43 223.5 43 224V232.3H31Z"/>
<path d="M31 238.6Q31 238 31.6 238H35.5L37 239.5H42.5Q43 239.5 43 240V248.3H31Z"/>
<path d="M31 254.6Q31 254 31.6 254H35.5L37 255.5H42.5Q43 255.5 43 256V264.3H31Z"/>
<path d="M31 270.6Q31 270 31.6 270H35.5L37 271.5H42.5Q43 271.5 43 272V280.3H31Z"/>
</g>
<path d="M196 54.5H203L199.5 50Z" fill="#c4c4c4"/>
<path d="M196 263.5H203L199.5 268Z" fill="#c4c4c4"/>
<path d="M230 89.5Q230 86.3 233.2 86.3H248L252.5 94.5H274.8Q278 94.5 278 97.7V123.8Q278 127 274.8 127H233.2Q230 127 230 123.8Z" fill="#c2c2c2"/>
<path d="M886.2 10Q887 8.5 889 8.5Q891.5 8.5 891.5 10.8V13.5" stroke="#c4c4c4" stroke-width="1.1" fill="none"/>
<rect x="885.6" y="13.6" width="7" height="4" stroke="#c4c4c4" stroke-width="1.1" fill="none"/>
<rect x="905" y="8" width="2" height="2" fill="#c4c4c4"/><rect x="905" y="11.7" width="2" height="2" fill="#c4c4c4"/><rect x="905" y="15.4" width="2" height="2" fill="#c4c4c4"/>
<path d="M848 262.9H903" stroke="#636363" stroke-width="2"/>
<circle cx="880" cy="262.9" r="5.1" fill="#9c9c9c"/>
</svg>


<!-- ============ status bar ============ -->
<div class="a" style="left:0;top:743px;width:1205px;height:22px;background:#191919"></div>
<svg style="left:0;top:740px" width="1205" height="25">
<g fill="#262626"><rect x="1101" y="5" width="1" height="20"/><rect x="1126" y="5" width="1" height="20"/><rect x="1152" y="5" width="1" height="20"/><rect x="1178" y="5" width="1" height="20"/></g>
<g fill="#c4c4c4">
<ellipse cx="1113" cy="15.5" rx="4.5" ry="5.8"/>
<ellipse cx="1113" cy="9.5" rx="2.6" ry="1.8"/>
<path d="M1106.5 12L1108.5 13M1119.5 12L1117.5 13M1106 16.5H1108.5M1120 16.5H1117.5M1106.5 21L1108.8 19.5M1119.5 21L1117.2 19.5M1110 8L1108.5 6.5M1116 8L1117.5 6.5" stroke="#c4c4c4" stroke-width="1.2"/>
<ellipse cx="1139.5" cy="10.3" rx="6.5" ry="2.7"/>
<path d="M1133 11.8Q1139.5 15.5 1146 11.8V15Q1139.5 18.5 1133 15Z"/>
<path d="M1133 16.3Q1139.5 20 1146 16.3V19.3Q1139.5 22.5 1133 19.3Z"/>
</g>
<path d="M1106 8L1120 22M1133 8L1146 22M1158.5 8L1172 22" stroke="#191919" stroke-width="2.2"/>
<path d="M1106 8L1120 22M1133 8L1146 22M1158.5 8L1172 22" stroke="#c4c4c4" stroke-width="1.1"/>
<g stroke="#c4c4c4" stroke-width="1.3" fill="none">
<path d="M1159 12.5A6.5 6.5 0 0 1 1170.5 10M1171.5 17.5A6.5 6.5 0 0 1 1160 20"/>
</g>
<circle cx="1165" cy="14.5" r="2.8" fill="#c4c4c4"/>
<rect x="1163.6" y="17.5" width="2.8" height="2" fill="#c4c4c4"/>
<circle cx="1190.9" cy="14.6" r="6.5" stroke="#c4c4c4" stroke-width="1.1" fill="none"/>
<path d="M1187.8 14.6L1190 16.8L1194 12.6" stroke="#c4c4c4" stroke-width="1.3" fill="none"/>
</svg>

</body></html>
